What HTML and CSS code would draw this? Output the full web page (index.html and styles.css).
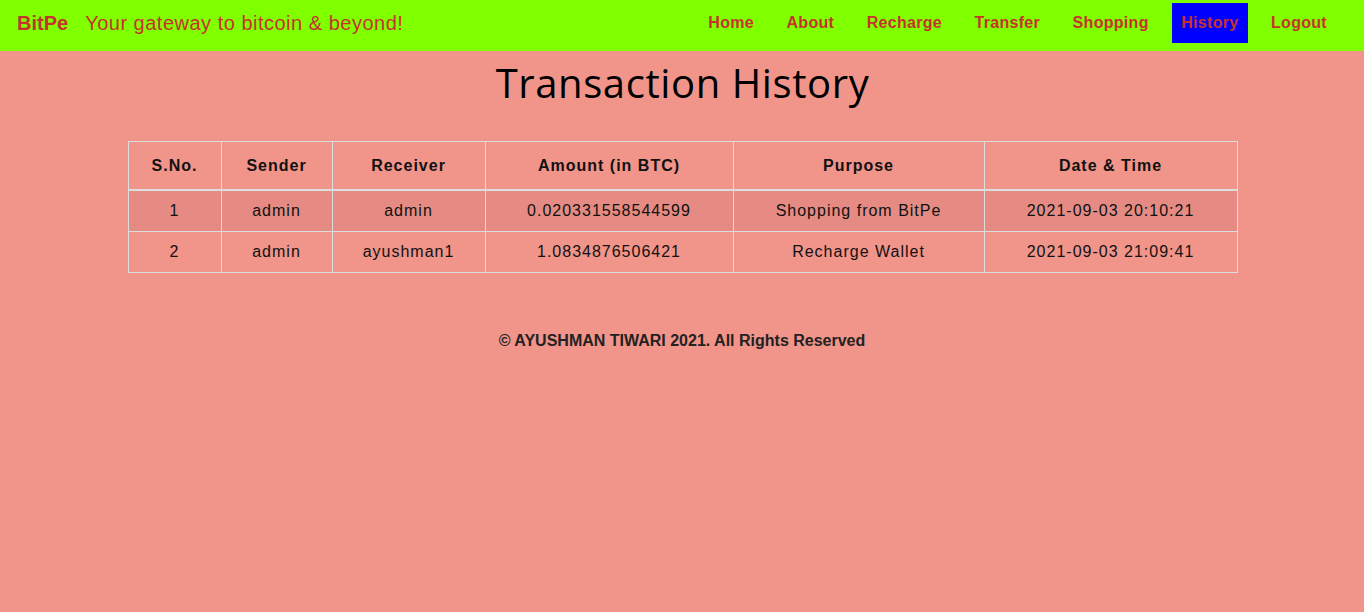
FILE: index.html
```html
<!DOCTYPE html>
<html>
<head>
<meta charset="utf-8">
<title>BitPe - Transaction History</title>
<link rel="stylesheet" href="styles.css">
</head>
<body>
<header class="navbar">
  <div class="brand">
    <span class="logo">BitPe</span>
    <span class="tagline">Your gateway to bitcoin &amp; beyond!</span>
  </div>
  <nav class="links">
    <a href="#">Home</a>
    <a href="#">About</a>
    <a href="#">Recharge</a>
    <a href="#">Transfer</a>
    <a href="#">Shopping</a>
    <a href="#" class="active">History</a>
    <a href="#">Logout</a>
  </nav>
</header>
<main class="content">
  <h1 class="title">Transaction History</h1>
  <table class="history">
    <thead>
      <tr>
        <th class="c1">S.No.</th>
        <th class="c2">Sender</th>
        <th class="c3">Receiver</th>
        <th class="c4">Amount (in BTC)</th>
        <th class="c5">Purpose</th>
        <th class="c6">Date &amp; Time</th>
      </tr>
    </thead>
    <tbody>
      <tr class="odd">
        <td>1</td><td>admin</td><td>admin</td><td>0.020331558544599</td><td>Shopping from BitPe</td><td>2021-09-03 20:10:21</td>
      </tr>
      <tr>
        <td>2</td><td>admin</td><td>ayushman1</td><td>1.0834876506421</td><td>Recharge Wallet</td><td>2021-09-03 21:09:41</td>
      </tr>
    </tbody>
  </table>
</main>
<footer class="footer">© AYUSHMAN TIWARI 2021. All Rights Reserved</footer>
</body>
</html>
```
FILE: styles.css
```css
html, body {
  margin: 0;
  padding: 0;
  background: #f1948a;
  font-family: "Liberation Sans", Arial, sans-serif;
  min-height: 100%;
}
.navbar {
  height: 51px;
  background: #7fff00;
  display: flex;
  align-items: flex-start;
  justify-content: space-between;
  color: #c8322d;
}
.brand {
  display: flex;
  align-items: baseline;
  padding: 12px 0 0 17px;
}
.logo {
  font-size: 20px;
  font-weight: bold;
}
.tagline {
  font-size: 20px;
  margin-left: 17px;
  letter-spacing: 0.5px;
}
.links {
  display: flex;
  gap: 14.5px;
  padding: 3px 28px 0 0;
}
.links a {
  color: #c8322d;
  text-decoration: none;
  font-size: 16px;
  font-weight: bold;
  padding: 11px 9px;
  line-height: 18px;
  letter-spacing: 0.3px;
}
.links a.active {
  background: #0000ff;
}
.content {
  display: flex;
  flex-direction: column;
  align-items: center;
  padding-left: 1px;
}
.title {
  font-family: "Open Sans", Lato, sans-serif;
  font-weight: 400;
  font-size: 40px;
  letter-spacing: 0.6px;
  font-variant-ligatures: none;
  margin: 10px 0 36px;
  line-height: 44px;
  color: #000;
}
.history {
  width: 1110px;
  border-collapse: collapse;
  color: #111;
  letter-spacing: 1px;
  font-size: 16px;
}
.history th, .history td {
  border: 1px solid #dddddd;
  text-align: center;
  line-height: 18px;
}
.history th {
  padding: 15px 8px 14px;
  border-bottom: 2px solid #dddddd;
}
.history td {
  padding: 11px 8px;
}
.history tr.odd {
  background: #e58b83;
}
.c1 { width: 76px; }
.c2 { width: 94px; }
.c3 { width: 136px; }
.c4 { width: 231px; }
.c5 { width: 234px; }
.footer {
  text-align: center;
  font-weight: bold;
  font-size: 16px;
  color: #222;
  margin-top: 59px;
}
```
